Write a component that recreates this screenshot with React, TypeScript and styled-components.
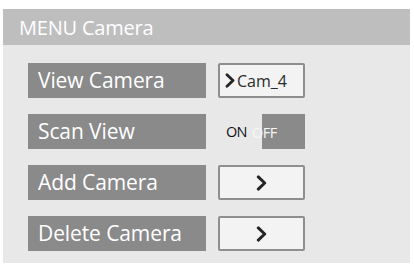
import React from "react";
import styled, { createGlobalStyle } from "styled-components";

const Global = createGlobalStyle`
  html, body { margin: 0; padding: 0; background: #ffffff; }
  body { font-family: "Open Sans", "Liberation Sans", sans-serif; }
`;

const Panel = styled.div`
  margin: 9px 0 0 3px;
  width: 407px;
  height: 254px;
  background: #e8e8e9;
  display: flex;
  flex-direction: column;
`;

const Header = styled.div`
  height: 36px;
  background: #bebebf;
  color: #ffffff;
  font-size: 20px;
  display: flex;
  align-items: center;
  padding-left: 16px;
  letter-spacing: -0.2px;
`;

const List = styled.div`
  display: flex;
  flex-direction: column;
  gap: 16px;
  padding: 18px 0 0 25px;
`;

const Row = styled.div`
  display: grid;
  grid-template-columns: 178px 87px;
  column-gap: 12px;
  height: 35px;
`;

const Label = styled.div`
  background: #8a8a8b;
  color: #ffffff;
  font-size: 21px;
  display: flex;
  align-items: center;
  padding: 0 0 2px 10px;
  letter-spacing: -0.1px;
`;

const Button = styled.div<{ $center?: boolean }>`
  box-sizing: border-box;
  border: 2px solid #8e8e8f;
  border-radius: 2px;
  background: #f3f3f3;
  display: flex;
  align-items: center;
  justify-content: ${(p) => (p.$center ? "center" : "flex-start")};
  padding-left: ${(p) => (p.$center ? "0" : "5px")};
  color: #2a2a2a;
  font-size: 16px;
  gap: 2px;
`;

const Toggle = styled.div`
  display: grid;
  grid-template-columns: 44px 43px;
  font-size: 14.5px;
  position: relative;
`;

const OnPart = styled.div`
  display: flex;
  align-items: center;
  padding-left: 8px;
  color: #111111;
  letter-spacing: -0.8px;
`;

const OffPart = styled.div`
  background: #8a8a8b;
`;

const OffText = styled.span`
  position: absolute;
  left: 34px;
  top: 50%;
  transform: translateY(-50%);
  color: #f6f6f6;
  letter-spacing: -0.5px;
`;

const Chevron = ({ w, h }: { w: number; h: number }) => (
  <svg width={w} height={h} viewBox="0 0 10 15">
    <path d="M2 1.8 L8 7.5 L2 13.2" fill="none" stroke="#242424" strokeWidth="2.8" strokeLinecap="round" strokeLinejoin="round" />
  </svg>
);

export default function App() {
  return (
    <>
      <Global />
      <Panel>
        <Header>MENU Camera</Header>
        <List>
          <Row>
            <Label>View Camera</Label>
            <Button>
              <Chevron w={10} h={15} />
              <span>Cam_4</span>
            </Button>
          </Row>
          <Row>
            <Label>Scan View</Label>
            <Toggle>
              <OnPart>ON</OnPart>
              <OffPart />
              <OffText>OFF</OffText>
            </Toggle>
          </Row>
          <Row>
            <Label>Add Camera</Label>
            <Button $center>
              <Chevron w={11} h={16} />
            </Button>
          </Row>
          <Row>
            <Label>Delete Camera</Label>
            <Button $center>
              <Chevron w={11} h={16} />
            </Button>
          </Row>
        </List>
      </Panel>
    </>
  );
}
